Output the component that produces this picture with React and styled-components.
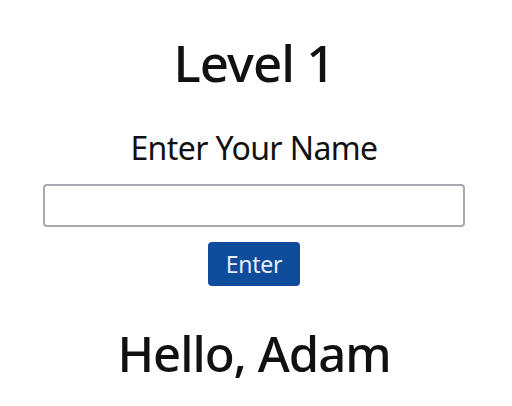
import React, { useState } from "react";
import styled, { createGlobalStyle } from "styled-components";

const GlobalStyle = createGlobalStyle`
  html, body {
    margin: 0;
    padding: 0;
    background: #ffffff;
  }
  body {
    font-family: "Noto Sans", "Open Sans", sans-serif;
    color: #111111;
  }
`;

const Page = styled.div`
  display: flex;
  flex-direction: column;
  align-items: center;
  width: 508px;
  padding-top: 32px;
`;

const Title = styled.h1`
  margin: 0;
  font-size: 51px;
  line-height: 60px;
  font-weight: 500;
  letter-spacing: -1px;
`;

const Label = styled.label`
  margin-top: 38px;
  font-size: 32px;
  line-height: 36px;
  font-weight: 400;
  letter-spacing: -0.6px;
`;

const NameInput = styled.input`
  box-sizing: border-box;
  margin-top: 18px;
  width: 422px;
  height: 43px;
  border: 2px solid #a9a8b0;
  border-radius: 4px;
  background: #ffffff;
  font-size: 22px;
  font-family: inherit;
  padding: 0 8px;
  outline: none;
`;

const Button = styled.button`
  box-sizing: border-box;
  margin-top: 15px;
  width: 92px;
  height: 44px;
  border: none;
  border-radius: 4px;
  background: #0f4c9c;
  color: #e8eef7;
  font-family: inherit;
  font-size: 23px;
  letter-spacing: -0.3px;
  cursor: pointer;
`;

const Greeting = styled.h1`
  margin: 39px 0 0;
  font-size: 49px;
  line-height: 56px;
  font-weight: 500;
  letter-spacing: -1px;
`;

export default function App() {
  const [value, setValue] = useState("");
  const [name, setName] = useState("Adam");

  return (
    <>
      <GlobalStyle />
      <Page>
        <Title>Level 1</Title>
        <Label htmlFor="name">Enter Your Name</Label>
        <NameInput
          id="name"
          value={value}
          onChange={e => setValue(e.target.value)}
        />
        <Button onClick={() => value && setName(value)}>Enter</Button>
        <Greeting>Hello, {name}</Greeting>
      </Page>
    </>
  );
}
